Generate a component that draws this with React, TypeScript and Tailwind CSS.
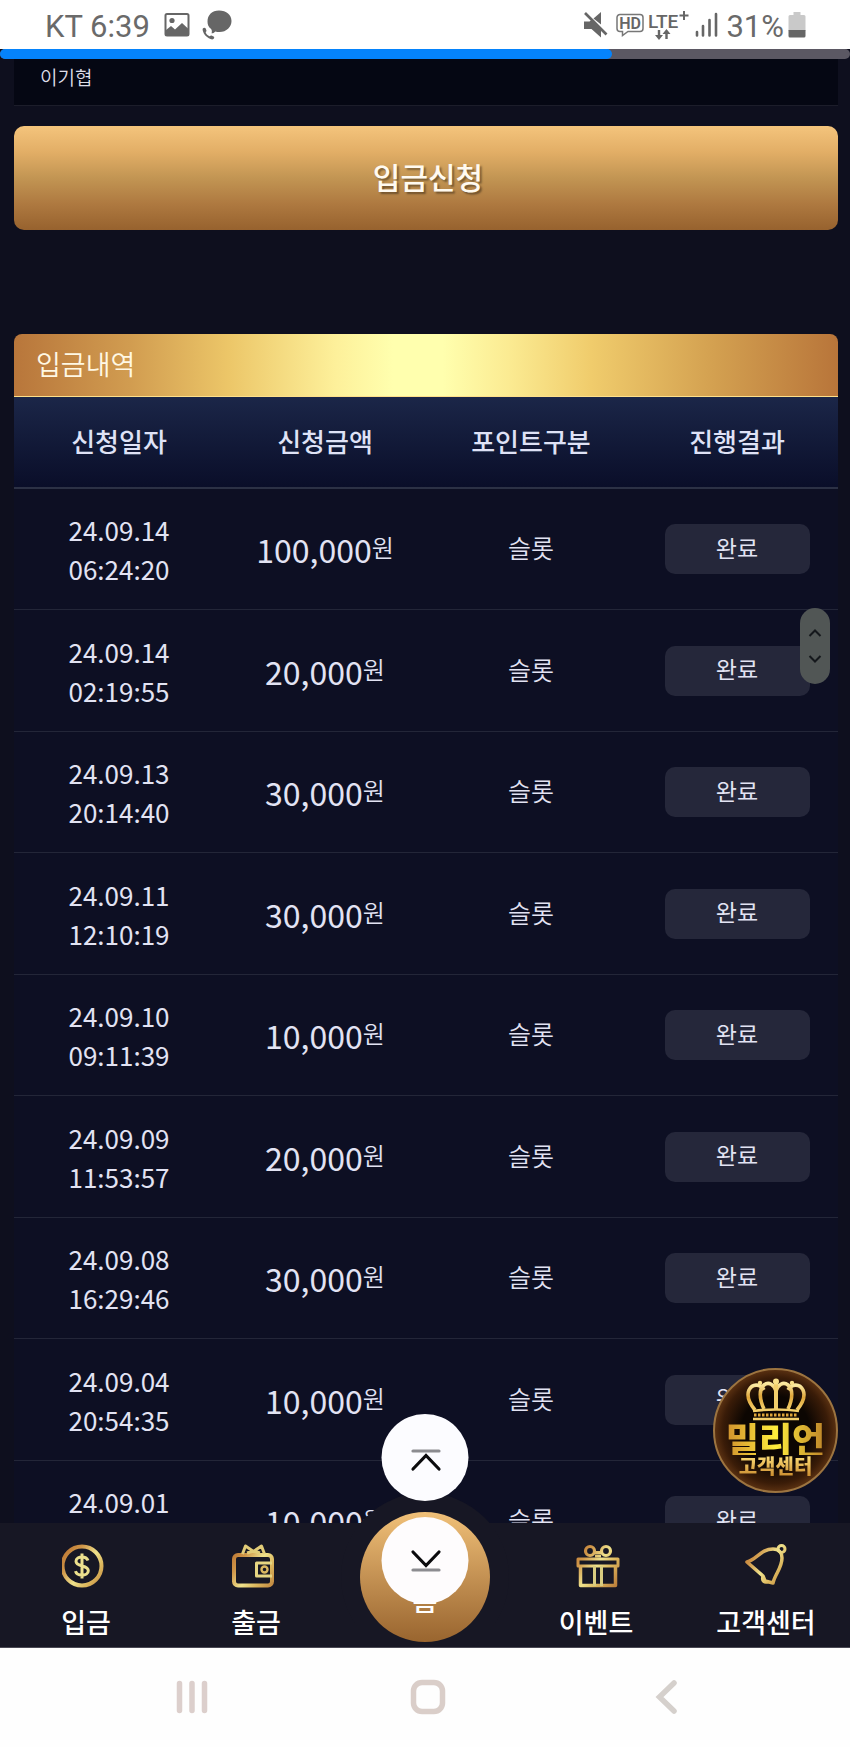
import type { ReactNode } from 'react';

interface Deposit {
  date: string;
  time: string;
  amount: string;
}

const deposits: Deposit[] = [
  { date: '24.09.14', time: '06:24:20', amount: '100,000' },
  { date: '24.09.14', time: '02:19:55', amount: '20,000' },
  { date: '24.09.13', time: '20:14:40', amount: '30,000' },
  { date: '24.09.11', time: '12:10:19', amount: '30,000' },
  { date: '24.09.10', time: '09:11:39', amount: '10,000' },
  { date: '24.09.09', time: '11:53:57', amount: '20,000' },
  { date: '24.09.08', time: '16:29:46', amount: '30,000' },
  { date: '24.09.04', time: '20:54:35', amount: '10,000' },
  { date: '24.09.01', time: '18:22:07', amount: '10,000' },
];

const columns = ['신청일자', '신청금액', '포인트구분', '진행결과'];

function StatusBar() {
  return (
    <header className="flex h-[49px] shrink-0 items-center justify-between bg-white pl-[45px] pr-[44px] font-['Roboto',sans-serif] text-[31px] leading-none text-[#6a6a6a]">
      <div className="flex items-center">
        <span className="pt-1">KT 6:39</span>
        <svg className="ml-3.5" width="26" height="26" viewBox="0 0 26 26" fill="none">
          <rect x="1.5" y="2" width="23" height="21.5" rx="1.5" stroke="#666" strokeWidth="2" />
          <circle cx="8" cy="8.5" r="2.6" fill="#666" />
          <path d="M2 18l5-4 4 3.500 7-6.500 6.500 6V23H2z" fill="#666" />
        </svg>
        <svg className="ml-3" width="30" height="30" viewBox="0 0 30 30" fill="#666">
          <path d="M17 0.500c7.500 0 12.500 4.500 12.500 10.500S24.500 22 17.500 22c-1.500 0-3-.2-4.200-.6-1 1.300-2.300 1.800-3.800 1.800.6-1.400.5-2.800-.4-4.200C6.500 17 5.500 14.500 5.500 11.500 5.500 5 10 .5 17 .5z" />
          <path d="M.8 18.500c1-1.300 2.400-1 2.900 0l.8 2.200c.1.700-.8 1-.8 1.700.7 1.700 2 3 3.800 3.800.8.200 1.200-.8 2-.7l2.100.9c1 .6.800 1.800-.3 2.700-1 .6-2.700.2-4.500-.8-3-1.700-5-4-6-7.500-.2-1-.3-1.700 0-2.300z" />
        </svg>
      </div>
      <div className="flex items-center">
        <svg width="25" height="26" viewBox="0 0 25 26" fill="#666">
          <path d="M1 9.500h5.500l3-2.500L18 16v9.500L8.500 17H1z" />
          <path d="M10.500 6.500L18 0v12.500z" />
          <path d="M2 1l21.500 21.500" stroke="#666" strokeWidth="2.6" />
        </svg>
        <svg className="ml-2" width="28" height="26" viewBox="0 0 28 26" fill="none">
          <path
            d="M4 2.500h20a3 3 0 0 1 3 3v11a3 3 0 0 1-3 3H12l-5.500 4v-4H4a3 3 0 0 1-3-3v-11a3 3 0 0 1 3-3z"
            stroke="#777"
            strokeWidth="1.500"
          />
          <text x="14" y="17" textAnchor="middle" fontSize="16" fontWeight="600" fill="#666">HD</text>
        </svg>
        <svg className="ml-1" width="42" height="32" viewBox="0 0 42 32" fill="none">
          <text x="0" y="19" fontSize="19" fontWeight="500" fill="#666">LTE</text>
          <path d="M36 2v9M31.500 6.500h9" stroke="#666" strokeWidth="2" />
          <path d="M11 21v7M18.500 30v-7" stroke="#666" strokeWidth="2.400" />
          <path d="M7 26h8L11 31zM14.500 25h8L18.500 20z" fill="#666" />
        </svg>
        <svg className="ml-1" width="24" height="26" viewBox="0 0 24 26" stroke="#666" strokeWidth="2.600" strokeLinecap="round">
          <path d="M3 20v3.500M9 14v9.500M15.500 8v15.500M22 2v21.500" />
        </svg>
        <span className="ml-2 pt-1">31%</span>
        <svg className="ml-1" width="18" height="26" viewBox="0 0 18 26">
          <path d="M5.500 0h7v3H16a1.500 1.500 0 0 1 1.500 1.500V19H.5V4.500A1.500 1.500 0 0 1 2 3h3.500z" fill="#c9c9c9" />
          <path d="M.5 18h17v6a1.500 1.500 0 0 1-1.500 1.500H2A1.500 1.500 0 0 1 .5 24z" fill="#666" />
        </svg>
      </div>
    </header>
  );
}

function DepositTable() {
  return (
    <section className="mt-[104px]">
      <h2 className="flex h-[63px] items-center rounded-t-lg border-b border-[#ffe08a] bg-[linear-gradient(90deg,#b8763b_0%,#d19c50_14%,#ecc668_26%,#fdf09a_39%,#ffffae_46%,#ffffae_52%,#fbeb92_60%,#f0cc6c_70%,#d3a050_85%,#b8753a_100%)] px-[22px] pb-0.5 text-[27px] font-[350] text-[#fff8e4]">
        입금내역
      </h2>
      <table className="w-full table-fixed border-separate border-spacing-0 bg-[#0d0f23] text-center">
        <thead>
          <tr>
            {columns.map((name) => (
              <th
                key={name}
                scope="col"
                className="h-[92px] border-b-2 border-[#2c3145] bg-linear-to-b from-[#1b2648] to-[#0a0e29] pt-0 pr-0 pb-1 pl-1 text-[26px] font-medium text-[#dfe2f6]"
              >
                {name}
              </th>
            ))}
          </tr>
        </thead>
        <tbody>
          {deposits.map((item) => (
            <tr key={item.date + item.time} className="odd:h-[121px] even:h-[122px]">
              <td className="border-b border-[#232638] py-0 pr-0 pl-1 text-[26px] leading-[39px] text-[#e2e3f3]">
                {item.date}
                <br />
                {item.time}
              </td>
              <td className="border-b border-[#232638] py-0 pr-0 pl-1">
                <div className="flex items-center justify-center leading-none text-[#e2e3f3]">
                  <span className="text-[32px]">{item.amount}</span>
                  <span className="pb-1 text-[24px] font-[350]">원</span>
                </div>
              </td>
              <td className="border-b border-[#232638] pt-0 pr-0 pb-0.5 pl-1 text-[25px] font-[350] text-[#e2e3f3]">
                슬롯
              </td>
              <td className="border-b border-[#232638] py-0 pr-0 pl-1">
                <button type="button" className="h-[50px] w-[145px] rounded-[10px] bg-[#25273a] pb-1 text-[23px] text-[#e2e3f3]">
                  완료
                </button>
              </td>
            </tr>
          ))}
        </tbody>
      </table>
    </section>
  );
}

function GoldDefs() {
  return (
    <svg width="0" height="0" className="absolute" aria-hidden="true">
      <defs>
        <linearGradient id="gold" x1="0" y1="4" x2="48" y2="40" gradientUnits="userSpaceOnUse">
          <stop offset="0" stopColor="#b9702f" />
          <stop offset="0.25" stopColor="#cf9548" />
          <stop offset="0.5" stopColor="#efe28c" />
          <stop offset="0.7" stopColor="#dcb65c" />
          <stop offset="1" stopColor="#b87838" />
        </linearGradient>
      </defs>
    </svg>
  );
}

function NavIcon({ children }: { children: ReactNode }) {
  return (
    <svg width="48" height="44" viewBox="0 0 48 44" fill="none" stroke="url(#gold)" strokeWidth="4" strokeLinejoin="round">
      {children}
    </svg>
  );
}

function NavLink({ label, children }: { label: string; children: ReactNode }) {
  return (
    <a href="#" className="flex flex-col items-center gap-4 pt-[21px] pl-0.5 text-[27px] font-medium leading-9 text-white">
      <NavIcon>{children}</NavIcon>
      {label}
    </a>
  );
}

function SupportBadge() {
  return (
    <a
      href="#"
      className="absolute right-3 bottom-full mb-[30px] flex size-[125px] flex-col items-center rounded-full border-2 border-[#9c7440] bg-[radial-gradient(circle,#0c0602_40%,#3a1c08_62%,#5c3212_72%)] pt-2 font-black"
    >
      <svg width="60" height="43" viewBox="0 0 60 43" fill="none">
        <defs>
          <linearGradient id="crown" x1="0" y1="0" x2="0" y2="1">
            <stop offset="0" stopColor="#fbe9a0" />
            <stop offset="0.5" stopColor="#dfa63a" />
            <stop offset="1" stopColor="#f3cf6b" />
          </linearGradient>
        </defs>
        <g stroke="url(#crown)" strokeWidth="3.6">
          <path d="M9 32C4 26 0 19 3 12 6 6 14 5 18 12" />
          <path d="M51 32c5-6 9-13 6-20-3-6-11-7-15 0" />
          <path d="M18 31C13 20 13 11 18 7c5-4 10 0 12 6" />
          <path d="M42 31c5-11 5-20 0-24-5-4-10 0-12 6" />
        </g>
        <path d="M30 5v26" stroke="#f3cf6b" strokeWidth="4" />
        <circle cx="30" cy="3.500" r="3" fill="#f9e08a" />
        <circle cx="14" cy="5" r="2.200" fill="#f9e08a" />
        <circle cx="46" cy="5" r="2.200" fill="#f9e08a" />
        <path d="M7 33q23-3 46 0M7 41h46" stroke="#f3cf6b" strokeWidth="2.600" />
        <path d="M8 37h44" stroke="#dfa63a" strokeWidth="3" strokeDasharray="2.500 1.500" />
      </svg>
      <span className="bg-linear-to-r from-[#d0912d] via-[#ffee3c] to-[#bd8429] bg-clip-text text-[36px] leading-[34px] text-transparent">
        밀리언
      </span>
      <span className="bg-linear-to-b from-[#ffe27a] to-[#c98a2b] bg-clip-text text-[20px] leading-[22px] text-transparent">
        고객센터
      </span>
    </a>
  );
}

function BottomNav() {
  return (
    <nav className="relative grid h-[124px] shrink-0 grid-cols-5 bg-[#171724]">
      <GoldDefs />
      <NavLink label="입금">
        <circle cx="20" cy="22" r="19.500" />
        <path
          d="M26 16.500c-1-2.500-3.500-3.500-6-3.500-3 0-6 1.500-6 4.300 0 6.200 12.300 3.200 12.300 9.400 0 3-3 4.500-6.300 4.500-3 0-5.800-1.200-6.500-4M20 9.500v25"
          strokeWidth="3"
          stroke="#ece08e"
        />
      </NavLink>
      <NavLink label="출금">
        <rect x="2" y="11" width="38" height="30.500" rx="4" />
        <path d="M10.500 10l3-8 8 5.500L29.500 2l3 8M15 9l6.500-2 6.500 2" strokeWidth="3" stroke="#e2cc78" />
        <path d="M40 19H24.500v13H40" strokeWidth="3" stroke="#e6d582" />
        <circle cx="32.500" cy="25.500" r="3" strokeWidth="2.400" stroke="#d9b660" />
      </NavLink>
      <div>
        {/* raised home button, the dark disc lifts the bar round it */}
        <span className="absolute -top-[30px] left-1/2 size-[168px] -translate-x-1/2 rounded-full bg-[#171724]" />
        <a
          href="#"
          className="absolute -top-[11px] left-1/2 flex size-[130px] -translate-x-1/2 items-end justify-center rounded-full bg-linear-to-b from-[#f0c078] to-[#99652f] pb-6 text-[27px] font-medium leading-9 text-white"
        >
          홈
        </a>
      </div>
      <NavLink label="이벤트">
        <rect x="6" y="15" width="40" height="7" strokeWidth="3" />
        <path d="M8.500 22v19.500h35V22" strokeWidth="3.500" />
        <path d="M22.500 22v20M29.500 22v20" strokeWidth="3" stroke="#d9cc80" />
        <circle cx="18" cy="7" r="4.500" strokeWidth="3.200" />
        <circle cx="34" cy="7" r="4.500" strokeWidth="3.200" />
        <path d="M22 8.500h8M23 12h6" strokeWidth="2.800" />
      </NavLink>
      <NavLink label="고객센터">
        <path d="M5 18C15 15 19 5 31 5c6 0 9 4 9 9 0 10-7 16-9 25l-8-2-2-5z" strokeWidth="3.500" />
        <circle cx="39.500" cy="5" r="3.500" strokeWidth="3" />
        <path d="M21 32c-2 5 2 8 6 5" strokeWidth="3" />
      </NavLink>

      <button
        type="button"
        aria-label="맨 위로"
        className="absolute -top-[109px] left-1/2 flex size-[87px] -translate-x-1/2 items-center justify-center rounded-full bg-[#fcfcff]"
      >
        <svg width="32" height="32" viewBox="0 0 32 32" fill="none" strokeWidth="3.200" strokeLinecap="round">
          <path d="M3.500 9h26" stroke="#8c8c90" />
          <path d="M3.500 27L16.500 13.500l13 13.500" stroke="#0b0b0d" />
        </svg>
      </button>
      <button
        type="button"
        aria-label="맨 아래로"
        className="absolute -top-[6px] left-1/2 flex size-[87px] -translate-x-1/2 items-center justify-center rounded-full bg-[#fefcfd]"
      >
        <svg width="32" height="32" viewBox="0 0 32 32" fill="none" strokeWidth="3.200" strokeLinecap="round">
          <path d="M3.500 7L16.500 20.500l13-13.500" stroke="#0b0b0d" />
          <path d="M3.500 25h26" stroke="#8c8c90" />
        </svg>
      </button>
      <SupportBadge />
    </nav>
  );
}

function SystemNav() {
  return (
    <footer className="relative flex h-[100px] shrink-0 items-center justify-center gap-[202px] border-t border-[#4a4954] bg-[#fefefe] pb-0.5 pl-2.5">
      <button type="button" aria-label="최근 앱">
        <svg width="32" height="34" viewBox="0 0 32 34" stroke="#dccfcc" strokeWidth="5.500" strokeLinecap="round">
          <path d="M3.500 3.500v27M16 3.500v27M28.500 3.500v27" />
        </svg>
      </button>
      <button type="button" aria-label="홈">
        <svg width="36" height="36" viewBox="0 0 36 36" fill="none">
          <rect x="3.500" y="3.500" width="29" height="29" rx="8.500" stroke="#dacec9" strokeWidth="5.500" />
        </svg>
      </button>
      <button type="button" aria-label="뒤로">
        <svg width="36" height="36" viewBox="0 0 36 36" fill="none">
          <path d="M26 4L11.500 18 26 32" stroke="#d5d0cc" strokeWidth="5.500" strokeLinecap="round" />
        </svg>
      </button>
    </footer>
  );
}

export default function App() {
  return (
    <div className="flex h-screen flex-col overflow-hidden bg-[#0e0f1e] font-['Noto_Sans_CJK_KR',sans-serif]">
      <StatusBar />
      <div className="h-[10px] shrink-0 rounded-full bg-[#5b5863]">
        <div className="h-full w-[72%] rounded-full bg-[#0583fb]" />
      </div>

      <main className="relative min-h-0 flex-1 overflow-hidden pl-[14px] pr-3">
        <input
          type="text"
          aria-label="입금자명"
          defaultValue="이기협"
          className="block h-[47px] w-full border-b border-[#1c1d2a] bg-[#050713] px-[26px] pb-3 text-[19px] font-[350] text-[#dedee8]"
        />
        <button
          type="button"
          className="mt-5 h-[104px] w-full rounded-[10px] bg-[linear-gradient(#f4c47c_0%,#e2ae66_25%,#c29553_50%,#ae7940_75%,#97622e_100%)] pb-1 pl-1 text-[30px] font-medium text-[#fffaf0] text-shadow-[2px_2px_2px_rgb(0_0_0/0.4)]"
        >
          입금신청
        </button>
        <DepositTable />

        {/* scroll handle */}
        <div className="absolute right-5 top-[549px] flex h-[76px] w-[30px] flex-col items-center justify-center gap-3 rounded-full bg-[#515655]">
          <svg width="14" height="14" viewBox="0 0 14 14" fill="none" stroke="#15181c" strokeWidth="2">
            <path d="M1.500 10L7 4.500l5.500 5.500" />
          </svg>
          <svg width="14" height="14" viewBox="0 0 14 14" fill="none" stroke="#15181c" strokeWidth="2">
            <path d="M1.500 4L7 9.500 12.500 4" />
          </svg>
        </div>
      </main>

      <BottomNav />
      <SystemNav />
    </div>
  );
}
